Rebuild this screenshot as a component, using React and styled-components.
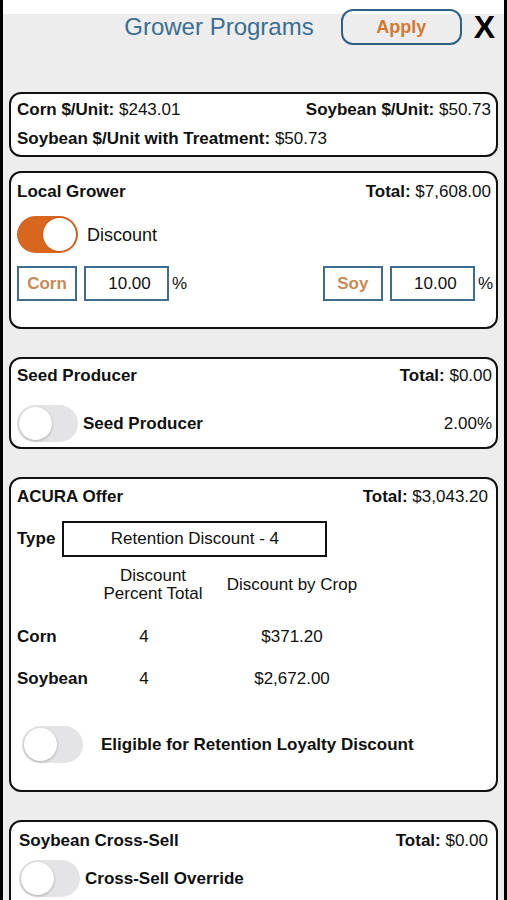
import styled, { createGlobalStyle } from "styled-components";

const GlobalStyle = createGlobalStyle`
  html, body {
    margin: 0;
    padding: 0;
    background: #000;
  }
  body {
    font-family: "Liberation Sans", Arial, sans-serif;
    color: #111;
  }
`;

const Page = styled.div`
  margin: 0 3px;
  height: 900px;
  overflow: hidden;
  background: linear-gradient(#fff 0 14px, #ededed 14px);
  padding: 9px 6px 0 6px;
  box-sizing: border-box;
`;

const Header = styled.div`
  display: flex;
  align-items: center;
  justify-content: flex-end;
  height: 36px;
  padding-right: 3px;
  margin-bottom: 47px;
`;

const Title = styled.h1`
  margin: 0 27px 0 0;
  font-size: 24px;
  font-weight: 400;
  color: #3b6e93;
`;

const ApplyButton = styled.button`
  width: 121px;
  height: 36px;
  border: 2px solid #2f6086;
  border-radius: 12px;
  background: transparent;
  color: #d4782f;
  font-family: inherit;
  font-size: 18px;
  font-weight: 700;
  margin-right: 12px;
`;

const Close = styled.span`
  font-size: 32px;
  font-weight: 700;
  color: #000;
  line-height: 1;
`;

const Card = styled.div`
  background: #fff;
  border: 2px solid #111;
  border-radius: 12px;
  padding: ${(p) => p.$pad || "8px 6px"};
  margin-bottom: ${(p) => p.$gap || "28px"};
  font-size: 17px;
  line-height: 20px;
`;

const Row = styled.div`
  display: flex;
  align-items: center;
  justify-content: space-between;
  margin-top: ${(p) => p.$mt || "0"};
  margin-right: ${(p) => p.$mr || "0"};
`;

const Label = styled.span`
  font-weight: 700;
`;

const Value = styled.span`
  font-weight: 400;
`;

const Track = styled.div`
  flex: none;
  width: 61px;
  height: 37px;
  border-radius: 19px;
  box-sizing: border-box;
  background: ${(p) => (p.$on ? "#d9661f" : "#e4e4e6")};
  position: relative;
  margin-left: ${(p) => p.$ml || "0"};
`;

const Knob = styled.div`
  position: absolute;
  top: 2px;
  left: ${(p) => (p.$on ? "26px" : "2px")};
  width: 33px;
  height: 33px;
  border-radius: 50%;
  background: #fff;
  box-shadow: ${(p) =>
    p.$on ? "0 0 0 1px #c85a18" : "0 1px 3px rgba(0,0,0,0.25)"};
`;

const Toggle = ({ on, ml }) => (
  <Track $on={on} $ml={ml}>
    <Knob $on={on} />
  </Track>
);

const ToggleRow = styled.div`
  display: flex;
  align-items: center;
  gap: ${(p) => p.$gap || "8px"};
  margin-top: ${(p) => p.$mt || "0"};
`;

const ToggleText = styled.span`
  flex: 1;
  font-weight: ${(p) => (p.$bold ? 700 : 400)};
  font-size: ${(p) => (p.$bold ? "17px" : "18px")};
`;

const InputGroup = styled.div`
  display: flex;
  align-items: center;
`;

const CropBox = styled.div`
  width: 60px;
  height: 35px;
  box-sizing: border-box;
  border: 2px solid #3e6d90;
  display: flex;
  align-items: center;
  justify-content: center;
  color: #c98a52;
  font-weight: 700;
  margin-right: 7px;
`;

const NumBox = styled.div`
  width: 85px;
  height: 35px;
  box-sizing: border-box;
  border: 2px solid #3e6d90;
  display: flex;
  align-items: center;
  justify-content: center;
  padding-left: 6px;
  margin-right: 3px;
`;

const TypeBox = styled.div`
  width: 265px;
  height: 36px;
  box-sizing: border-box;
  border: 2px solid #111;
  display: flex;
  align-items: center;
  justify-content: center;
  margin-left: 7px;
`;

const TypeRow = styled.div`
  display: flex;
  align-items: center;
  margin-top: 14px;
`;

const Table = styled.div`
  display: grid;
  grid-template-columns: 83px 106px 172px;
  margin-top: 10px;
`;

const Cell = styled.div`
  box-sizing: border-box;
  font-weight: ${(p) => (p.$bold ? 700 : 400)};
  text-align: center;
  display: flex;
  align-items: center;
  justify-content: ${(p) => (p.$left ? "flex-start" : "center")};
  height: ${(p) => p.$h || "43px"};
  line-height: 18px;
  padding-top: ${(p) => p.$pt || "0"};
  padding-right: ${(p) => p.$pr || "0"};
`;

const App = () => {
  return (
    <>
      <GlobalStyle />
      <Page>
        <Header>
          <Title>Grower Programs</Title>
          <ApplyButton>Apply</ApplyButton>
          <Close>X</Close>
        </Header>

        <Card $pad="6px 5px 6px 6px" $gap="14px">
          <Row>
            <span>
              <Label>Corn $/Unit: </Label>
              <Value>$243.01</Value>
            </span>
            <span>
              <Label>Soybean $/Unit: </Label>
              <Value>$50.73</Value>
            </span>
          </Row>
          <Row $mt="9px">
            <span>
              <Label>Soybean $/Unit with Treatment: </Label>
              <Value>$50.73</Value>
            </span>
          </Row>
        </Card>

        <Card $pad="9px 3px 26px 6px">
          <Row $mr="2px">
            <Label>Local Grower</Label>
            <span>
              <Label>Total: </Label>
              <Value>$7,608.00</Value>
            </span>
          </Row>
          <ToggleRow $mt="14px" $gap="9px">
            <Toggle on />
            <ToggleText>Discount</ToggleText>
          </ToggleRow>
          <Row $mt="13px">
            <InputGroup>
              <CropBox>Corn</CropBox>
              <NumBox>10.00</NumBox>
              <span>%</span>
            </InputGroup>
            <InputGroup>
              <CropBox>Soy</CropBox>
              <NumBox>10.00</NumBox>
              <span>%</span>
            </InputGroup>
          </Row>
        </Card>

        <Card $pad="7px 4px 5px 6px">
          <Row>
            <Label>Seed Producer</Label>
            <span>
              <Label>Total: </Label>
              <Value>$0.00</Value>
            </span>
          </Row>
          <ToggleRow $mt="19px" $gap="5px">
            <Toggle />
            <ToggleText $bold>Seed Producer</ToggleText>
            <Value>2.00%</Value>
          </ToggleRow>
        </Card>

        <Card $pad="8px 8px 27px 6px">
          <Row>
            <Label>ACURA Offer</Label>
            <span>
              <Label>Total: </Label>
              <Value>$3,043.20</Value>
            </span>
          </Row>
          <TypeRow>
            <Label>Type</Label>
            <TypeBox>Retention Discount - 4</TypeBox>
          </TypeRow>
          <Table>
            <Cell $h="36px" />
            <Cell $h="36px">
              Discount
              <br />
              Percent Total
            </Cell>
            <Cell $h="36px">Discount by Crop</Cell>

            <Cell $left $bold $h="53px" $pt="15px">Corn</Cell>
            <Cell $h="53px" $pt="15px" $pr="18px">4</Cell>
            <Cell $h="53px" $pt="15px">$371.20</Cell>

            <Cell $left $bold $h="45px">Soybean</Cell>
            <Cell $h="45px" $pr="18px">4</Cell>
            <Cell $h="45px">$2,672.00</Cell>
          </Table>
          <ToggleRow $mt="25px" $gap="18px">
            <Toggle ml="5px" />
            <ToggleText $bold>Eligible for Retention Loyalty Discount</ToggleText>
          </ToggleRow>
        </Card>

        <Card $pad="9px 8px 20px 8px">
          <Row>
            <Label>Soybean Cross-Sell</Label>
            <span>
              <Label>Total: </Label>
              <Value>$0.00</Value>
            </span>
          </Row>
          <ToggleRow $mt="9px" $gap="5px">
            <Toggle />
            <ToggleText $bold>Cross-Sell Override</ToggleText>
          </ToggleRow>
        </Card>
      </Page>
    </>
  );
};

export default App;
